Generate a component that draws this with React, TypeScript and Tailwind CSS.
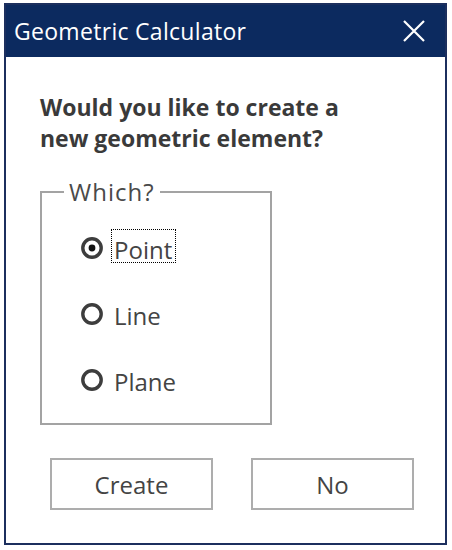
import React from "react";

function Radio({ checked }: { checked?: boolean }) {
  return (
    <svg width="22" height="22" viewBox="0 0 22 22" className="shrink-0 mt-[8px]">
      <circle cx="11" cy="11" r="9.2" fill="white" stroke="#3d3d3d" strokeWidth="3.4" />
      {checked && <circle cx="11" cy="11" r="3.4" fill="#111" />}
    </svg>
  );
}

export default function App() {
  const font = { fontFamily: '"Open Sans", "Noto Sans", sans-serif' };
  return (
    <div className="w-[452px] h-[550px] bg-white pt-[3px] pl-[4px]" style={font}>
      <div className="w-[443px] h-[542px] border-2 border-[#1c2f5e] flex flex-col bg-white">
        <div className="h-[52px] bg-[#0c2a5f] flex items-center justify-between pl-[8px] pr-[20px] shrink-0">
          <span className="text-white text-[23px] leading-[32px] tracking-[0.3px]">Geometric Calculator</span>
          <svg width="22" height="22" viewBox="0 0 22 22">
            <path d="M1 1 L21 21 M21 1 L1 21" stroke="white" strokeWidth="2.2" />
          </svg>
        </div>
        <div className="flex-1 flex flex-col pl-[34px]">
          <p className="mt-[35px] text-[23px] leading-[31px] font-bold text-[#3a3a3a] tracking-[0px]">
            Would you like to create a
            <br />
            new geometric element?
          </p>
          <div className="relative mt-[37px] w-[232px] h-[234px] border-2 border-[#a3a3a3] shrink-0">
            <span className="absolute -top-[17px] left-[22px] bg-white px-[5px] text-[24px] leading-[32px] tracking-[1px] text-[#4a4a4a]">
              Which?
            </span>
            <div className="flex flex-col pl-[39px] pt-[36px] gap-[32px]">
              <div className="flex items-start h-[34px]">
                <Radio checked />
                <span className="ml-[8px] h-[34px] border border-dotted border-black pl-[2px] pr-[3px] pt-[8px] text-[24px] leading-[24px] text-[#444]">
                  Point
                </span>
              </div>
              <div className="flex items-start h-[34px]">
                <Radio />
                <span className="ml-[11px] pt-[9px] text-[24px] leading-[24px] text-[#444]">Line</span>
              </div>
              <div className="flex items-start h-[34px]">
                <Radio />
                <span className="ml-[11px] pt-[9px] text-[24px] leading-[24px] text-[#444]">Plane</span>
              </div>
            </div>
          </div>
          <div className="flex gap-[38px] mt-[33px] pl-[10px]">
            <button className="w-[163px] h-[52px] border-2 border-[#adadad] bg-white pt-[2px] text-[24px] leading-[32px] text-[#444]">
              Create
            </button>
            <button className="w-[163px] h-[52px] border-2 border-[#adadad] bg-white pt-[2px] text-[24px] leading-[32px] text-[#444]">
              No
            </button>
          </div>
        </div>
      </div>
    </div>
  );
}
